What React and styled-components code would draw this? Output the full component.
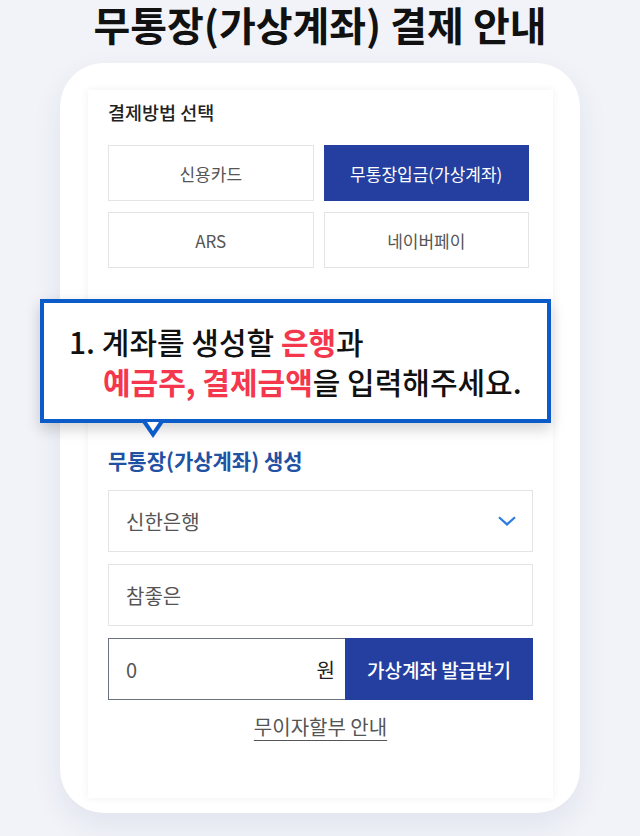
import React from 'react';
import styled, { createGlobalStyle } from 'styled-components';

const GlobalStyle = createGlobalStyle`
  html, body {
    margin: 0;
    padding: 0;
    background: #f1f3f8;
  }
  body {
    font-family: "Noto Sans CJK KR", "Noto Sans", sans-serif;
    color: #222;
  }
`;

const Page = styled.div`
  width: 640px;
  height: 836px;
  overflow: hidden;
  background: #f1f3f8;
`;

const Title = styled.h1`
  margin: 0 0 15px;
  font-size: 40px;
  line-height: 48px;
  font-weight: 700;
  text-align: center;
  color: #111;
`;

const Frame = styled.div`
  position: relative;
  width: 520px;
  margin: 0 auto;
  padding: 27px 27px 15px 28px;
  box-sizing: border-box;
  background: #fff;
  border-radius: 44px;
  box-shadow: 0 12px 30px rgba(40, 50, 110, 0.08);
`;

const Screen = styled.div`
  height: 708px;
  box-sizing: border-box;
  padding: 11px 20px 0;
  background: #fff;
  box-shadow: 0 0 8px rgba(40, 50, 110, 0.07);
`;

const Label = styled.div`
  font-size: 18.5px;
  line-height: 22px;
  font-weight: 500;
  color: #222;
`;

const MethodGrid = styled.div`
  display: grid;
  grid-template-columns: 1fr 1fr;
  gap: 11px 10px;
  width: 421px;
  margin-top: 22px;
`;

const Method = styled.div`
  display: flex;
  align-items: center;
  justify-content: center;
  height: 56px;
  box-sizing: border-box;
  border: 1px solid ${(p) => (p.active ? '#243f9f' : '#e4e4e4')};
  background: ${(p) => (p.active ? '#243f9f' : '#fff')};
  color: ${(p) => (p.active ? '#fff' : '#555')};
  font-size: 17px;
`;

const SectionTitle = styled.div`
  margin-top: 179px;
  font-size: 21px;
  line-height: 26px;
  font-weight: 700;
  color: #1f52a3;
`;

const Fields = styled.div`
  display: flex;
  flex-direction: column;
  gap: 12px;
  width: 425px;
  margin-top: 17px;
`;

const Field = styled.div`
  display: flex;
  align-items: center;
  justify-content: space-between;
  height: 62px;
  box-sizing: border-box;
  padding: 0 16px 0 17px;
  border: 1px solid #e4e4e4;
  font-size: 20px;
  color: #555;
`;

const AmountRow = styled.div`
  display: flex;
  height: 62px;
`;

const AmountInput = styled.div`
  flex: 1;
  display: flex;
  align-items: center;
  justify-content: space-between;
  padding: 0 10px 0 17px;
  border: 1px solid #6b7280;
  border-right: none;
  font-size: 20px;
  color: #555;
`;

const Unit = styled.span`
  color: #222;
`;

const IssueButton = styled.div`
  display: flex;
  align-items: center;
  justify-content: center;
  width: 188px;
  background: #243f9f;
  color: #fff;
  font-size: 19px;
  font-weight: 500;
`;

const Guide = styled.div`
  margin-top: 15px;
  text-align: center;
  font-size: 20px;
  line-height: 24px;
  color: #555;
  text-decoration: underline;
  text-underline-offset: 5px;
  text-decoration-thickness: 1px;
`;

const Callout = styled.div`
  position: absolute;
  left: -20px;
  top: 236px;
  width: 511px;
  height: 124px;
  box-sizing: border-box;
  padding: 18px 0 0 59px;
  border: 4px solid #0b5cc9;
  background: #fff;
  box-shadow: 0 6px 14px rgba(0, 0, 0, 0.18);
  font-size: 30px;
  line-height: 40px;
  font-weight: 500;
  color: #111;
  text-indent: -34px;

  &::before,
  &::after {
    content: '';
    position: absolute;
    left: 98px;
    width: 0;
    height: 0;
  }

  &::before {
    bottom: -19px;
    border-left: 11px solid transparent;
    border-right: 11px solid transparent;
    border-top: 16px solid #0b5cc9;
  }

  &::after {
    bottom: -12px;
    left: 103px;
    border-left: 6px solid transparent;
    border-right: 6px solid transparent;
    border-top: 9px solid #fff;
  }
`;

const Red = styled.span`
  color: #f5374d;
  font-weight: 700;
`;

const Chevron = () => (
  <svg width="18" height="10" viewBox="0 0 18 10" fill="none">
    <path d="M1 1.2L9 8.4L17 1.2" stroke="#2c7be0" strokeWidth="2.2" />
  </svg>
);

const methods = [
  { label: '신용카드' },
  { label: '무통장입금(가상계좌)', active: true },
  { label: 'ARS' },
  { label: '네이버페이' },
];

export default function App() {
  return (
    <Page>
      <GlobalStyle />
      <Title>무통장(가상계좌) 결제 안내</Title>
      <Frame>
        <Screen>
          <Label>결제방법 선택</Label>
          <MethodGrid>
            {methods.map((m) => (
              <Method key={m.label} active={m.active}>{m.label}</Method>
            ))}
          </MethodGrid>
          <SectionTitle>무통장(가상계좌) 생성</SectionTitle>
          <Fields>
            <Field>
              신한은행
              <Chevron />
            </Field>
            <Field>참좋은</Field>
            <AmountRow>
              <AmountInput>
                0
                <Unit>원</Unit>
              </AmountInput>
              <IssueButton>가상계좌 발급받기</IssueButton>
            </AmountRow>
          </Fields>
          <Guide>무이자할부 안내</Guide>
        </Screen>
        <Callout>
          1. 계좌를 생성할 <Red>은행</Red>과
          <br />
          <Red>예금주, 결제금액</Red>을 입력해주세요.
        </Callout>
      </Frame>
    </Page>
  );
}
